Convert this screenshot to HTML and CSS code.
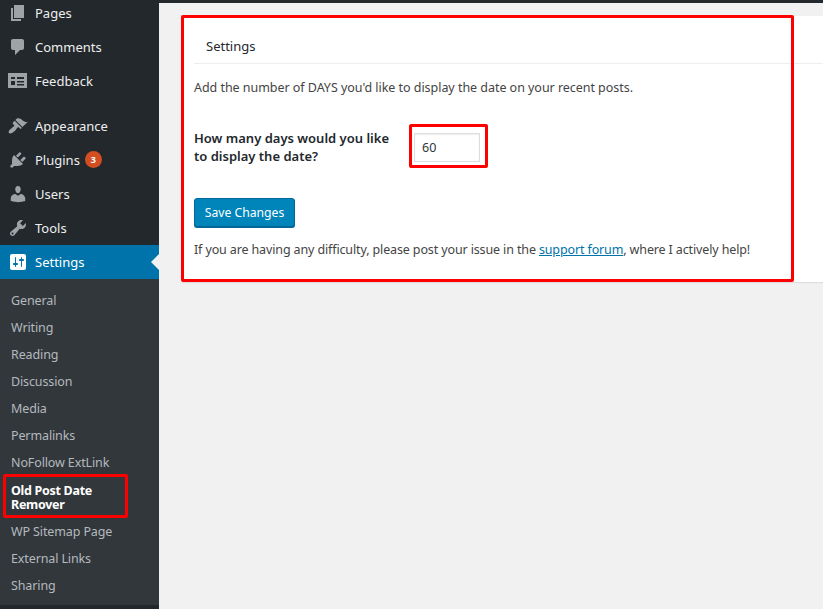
FILE: index.html
```html
<!DOCTYPE html>
<html lang="en">
<head>
<meta charset="utf-8">
<title>Old Post Date Remover</title>
<link rel="stylesheet" href="styles.css">
</head>
<body>
<div class="page">
  <aside class="sidebar">
    <ul class="menu">
      <li class="item"><svg class="icon" viewBox="0 0 20 20"><path d="M6 15V2h10v13H6zm-1 1h8v2H3V5h2v11z"/></svg>Pages</li>
      <li class="item"><svg class="icon" viewBox="0 0 20 20"><path d="M5 2h9c1.1 0 2 .9 2 2v7c0 1.1-.9 2-2 2h-2l-5 5v-5H5c-1.1 0-2-.9-2-2V4c0-1.1.9-2 2-2z"/></svg>Comments</li>
      <li class="item"><svg class="icon" viewBox="0 0 20 20"><path fill-rule="evenodd" d="M0 2h19v15H0zM3 6v2h4V6zm6 0v2h7V6zm-6 4v4h4v-4zm6 0v1.500h7V10zm0 3v1.500h7V13z"/></svg>Feedback</li>
      <li class="item gap"><svg class="icon" viewBox="0 0 20 20"><path d="M14.48 11.060L7.410 3.990l1.500-1.500c.5-.56 2.300-.47 3.510.32 1.210.8 1.430 1.280 2.910 2.100 1.180.64 2.450 1.260 4.450.85zm-.71.710L6.700 4.700 4.930 6.470c-.39.39-.39 1.020 0 1.410l1.060 1.060c.39.39.39 1.030 0 1.420-.6.6-1.430 1.110-2.210 1.690-.35.26-.7.53-1.010.84C1.430 13.260 0 16 1.100 17.100c1.100 1.100 3.840-.33 5.940-2.430.31-.31.58-.66.84-1.010.58-.78 1.090-1.610 1.690-2.210.39-.39 1.030-.39 1.420 0l1.060 1.060c.39.39 1.020.39 1.410 0z"/></svg>Appearance</li>
      <li class="item"><svg class="icon" viewBox="0 0 20 20"><path d="M13.110 4.360L9.870 7.600 8 5.730l3.240-3.240c.35-.34 1.050-.2 1.560.32.52.51.66 1.210.31 1.550zm-8 1.770l.91-1.120 9.010 9.010-1.190.84c-.71.71-2.630 1.160-3.820 1.160H6.140L4.900 17.260c-.59.59-1.540.59-2.120 0-.59-.58-.59-1.530 0-2.120l1.240-1.240v-3.880c0-1.130.4-3.190 1.090-3.890zm7.260 3.970l3.240-3.240c.34-.35 1.040-.21 1.550.31.52.51.66 1.210.31 1.550l-3.240 3.250z"/></svg>Plugins<span class="badge">3</span></li>
      <li class="item"><svg class="icon" viewBox="0 0 20 20"><path d="M10 9.250c-2.270 0-2.730-3.440-2.730-3.440C7 4.020 7.820 2 9.970 2c2.160 0 2.980 2.020 2.710 3.810 0 0-.41 3.440-2.680 3.440zm0 2.570L12.720 10c2.390 0 4.520 2.330 4.520 4.530v2.490s-3.650 1.130-7.240 1.130c-3.650 0-7.240-1.130-7.240-1.130v-2.490c0-2.250 1.940-4.480 4.470-4.480z"/></svg>Users</li>
      <li class="item"><svg class="icon" viewBox="0 0 20 20"><path d="M16.680 9.770c-1.340 1.340-3.300 1.670-4.950.99l-5.410 6.520c-.99.99-2.590.99-3.580 0s-.99-2.590 0-3.570l6.520-5.420c-.68-1.650-.35-3.610.99-4.950 1.280-1.280 3.120-1.620 4.720-1.060l-2.890 2.890 2.820 2.820 2.860-2.870c.53 1.580.18 3.390-1.080 4.650zM3.810 16.210c.4.39 1.040.39 1.430 0 .4-.4.4-1.040 0-1.430-.39-.4-1.030-.4-1.430 0-.39.39-.39 1.030 0 1.430z"/></svg>Tools</li>
      <li class="item active"><svg class="icon" viewBox="0 0 20 20"><path d="M18 16V4c0-1.100-.9-2-2-2H4c-1.100 0-2 .9-2 2v12c0 1.100.9 2 2 2h12c1.100 0 2-.9 2-2zM8 11h1c.55 0 1 .45 1 1s-.45 1-1 1H8v1.500c0 .28-.22.5-.5.5s-.5-.22-.5-.5V13H6c-.55 0-1-.45-1-1s.45-1 1-1h1V5.500c0-.28.22-.5.5-.5s.5.22.5.5V11zm5-2h-1c-.55 0-1-.45-1-1s.45-1 1-1h1V5.500c0-.28.22-.5.5-.5s.5.22.5.5V7h1c.55 0 1 .45 1 1s-.45 1-1 1h-1v5.500c0 .28-.22.5-.5.5s-.5-.22-.5-.5V9z"/></svg>Settings</li>
    </ul>
    <ul class="submenu">
      <li class="subitem">General</li>
      <li class="subitem">Writing</li>
      <li class="subitem">Reading</li>
      <li class="subitem">Discussion</li>
      <li class="subitem">Media</li>
      <li class="subitem">Permalinks</li>
      <li class="subitem">NoFollow ExtLink</li>
      <li class="subitem current">Old Post Date Remover</li>
      <li class="subitem">WP Sitemap Page</li>
      <li class="subitem">External Links</li>
      <li class="subitem">Sharing</li>
    </ul>
  </aside>
  <main class="main">
    <div class="topbar"></div>
    <section class="card">
      <h2 class="card-title">Settings</h2>
      <p class="intro">Add the number of DAYS you'd like to display the date on your recent posts.</p>
      <form class="form">
        <div class="field">
          <label class="label" for="days">How many days would you like to display the date?</label>
          <input class="input" id="days" type="text" value="60">
        </div>
        <button class="button" type="button">Save Changes</button>
      </form>
      <p class="note">If you are having any difficulty, please post your issue in the <a class="link" href="#">support forum</a>, where I actively help!</p>
    </section>
  </main>
  <div class="mark mark-card"></div>
  <div class="mark mark-input"></div>
  <div class="mark mark-menu"></div>
</div>
</body>
</html>
```

FILE: styles.css
```css
* { box-sizing: border-box; }
html, body { margin: 0; padding: 0; }
body {
  font-family: "Noto Sans", "Open Sans", sans-serif;
  font-size: 12.5px;
  color: #444;
  background: #f1f1f1;
}
.page {
  position: relative;
  display: flex;
  width: 823px;
  height: 609px;
  overflow: hidden;
}
.sidebar {
  width: 159px;
  flex: none;
  background: #23282d;
}
.menu, .submenu { list-style: none; margin: 0; padding: 0; }
.menu { margin-top: -4px; }
.item {
  display: flex;
  align-items: center;
  height: 34px;
  padding: 0 0 1px 8px;
  font-size: 13px;
  color: #eee;
  position: relative;
}
.item.gap { margin-top: 11px; }
.icon {
  width: 20px;
  height: 20px;
  margin-right: 7px;
  fill: #9ea3a8;
  flex: none;
}
.badge {
  width: 17px;
  height: 17px;
  margin-left: 5px;
  border-radius: 50%;
  background: #d54e21;
  color: #fff;
  font-size: 9px;
  font-weight: 700;
  line-height: 17px;
  text-align: center;
}
.item.active { background: #0073aa; color: #fff; }
.item.active .icon { fill: #fff; }
.item.active::after {
  content: "";
  position: absolute;
  right: 0;
  top: 9px;
  border: 8px solid transparent;
  border-right-color: #f1f1f1;
  border-left-width: 0;
}
.submenu {
  background: #32373c;
  padding: 9px 0 5px;
}
.subitem {
  padding: 6px 20px 7px 11px;
  line-height: 14px;
  letter-spacing: -.12px;
  color: #b4b9be;
}
.subitem.current {
  color: #fff;
  font-weight: 700;
  letter-spacing: -.3px;
  padding-top: 7px;
  padding-bottom: 7px;
}
.main { flex: 1; min-width: 0; }
.topbar { height: 3px; background: #23282d; }
.card {
  margin: 13px 0 0 23px;
  height: 266px;
  padding-left: 12px;
  background: #fff;
  box-shadow: 0 1px 1px rgba(0,0,0,.08);
}
.card-title {
  margin: 0;
  height: 48px;
  padding: 21px 0 0 12px;
  font-size: 13px;
  line-height: 18px;
  font-weight: 400;
  color: #23282d;
  border-bottom: 1px solid #eee;
}
.intro { margin: 14px 0 0; line-height: 20px; letter-spacing: -.04px; }
.form { margin-top: 31px; }
.field { display: flex; align-items: center; }
.label {
  width: 220px;
  padding-right: 18px;
  font-size: 13px;
  line-height: 18px;
  font-weight: 600;
  color: #23282d;
}
.input {
  width: 66px;
  height: 29px;
  padding: 0 7px;
  border: 1px solid #ddd;
  box-shadow: inset 0 1px 2px rgba(0,0,0,.07);
  background: #fff;
  font: inherit;
  color: #32373c;
}
.button {
  display: block;
  margin-top: 33px;
  width: 101px;
  height: 29px;
  padding: 0;
  border: 1px solid #006799;
  border-radius: 3px;
  background: #0085ba;
  box-shadow: 0 1px 0 #006799;
  color: #fff;
  font: inherit;
  font-size: 12.2px;
}
.note { margin: 13px 0 0; line-height: 20px; letter-spacing: -.13px; }
.link { color: #0073aa; text-decoration: underline; }
.mark {
  position: absolute;
  border: 3px solid #f00;
  border-radius: 2px;
  pointer-events: none;
}
.mark-card { left: 181px; top: 15px; width: 613px; height: 267px; }
.mark-input { left: 409px; top: 124px; width: 79px; height: 44px; }
.mark-menu { left: 3px; top: 474px; width: 125px; height: 44px; }
```
